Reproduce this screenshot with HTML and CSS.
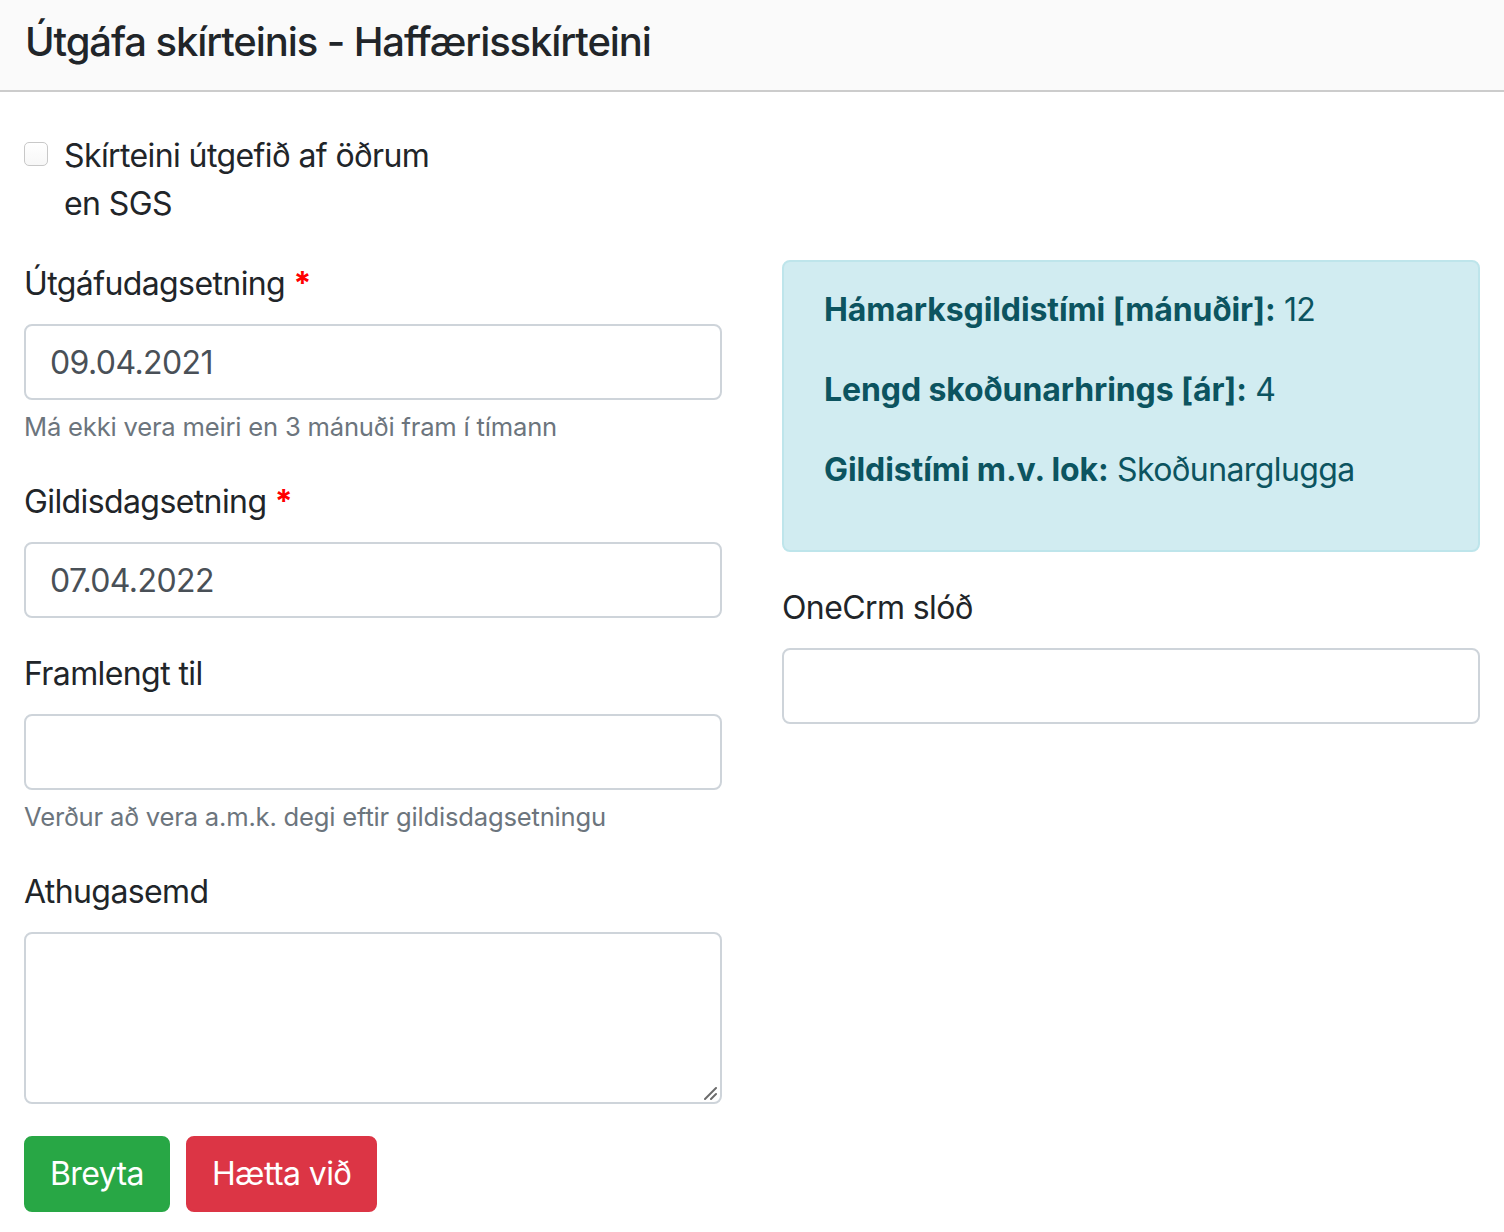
FILE: index.html
```html
<!DOCTYPE html>
<html lang="is">
<head>
<meta charset="utf-8">
<title>Útgáfa skírteinis</title>
<link rel="stylesheet" href="styles.css">
</head>
<body>
<div class="modal">
  <div class="modal-header">
    <h5 class="modal-title">Útgáfa skírteinis - Haffærisskírteini</h5>
  </div>
  <div class="modal-body">
    <div class="form-check">
      <span class="check-box"></span>
      <label class="check-label">Skírteini útgefið af öðrum en SGS</label>
    </div>
    <div class="row">
      <div class="col">
        <div class="form-group">
          <label class="form-label">Útgáfudagsetning <span class="req">*</span></label>
          <input class="form-control" type="text" value="09.04.2021">
          <small class="help">Má ekki vera meiri en 3 mánuði fram í tímann</small>
        </div>
        <div class="form-group">
          <label class="form-label">Gildisdagsetning <span class="req">*</span></label>
          <input class="form-control" type="text" value="07.04.2022">
        </div>
        <div class="form-group">
          <label class="form-label">Framlengt til</label>
          <input class="form-control" type="text" value="">
          <small class="help">Verður að vera a.m.k. degi eftir gildisdagsetningu</small>
        </div>
        <div class="form-group">
          <label class="form-label">Athugasemd</label>
          <div class="textarea-wrap">
            <textarea class="form-control textarea" rows="3"></textarea>
            <svg class="grip" width="14" height="14" viewBox="0 0 14 14" aria-hidden="true">
              <line x1="1" y1="13" x2="12" y2="2" stroke="#6b6b6b" stroke-width="2" stroke-linecap="round"/>
              <line x1="7" y1="13" x2="12" y2="8" stroke="#6b6b6b" stroke-width="2" stroke-linecap="round"/>
            </svg>
          </div>
        </div>
      </div>
      <div class="col">
        <div class="alert-info">
          <p><strong>Hámarksgildistími [mánuðir]:</strong> 12</p>
          <p><strong>Lengd skoðunarhrings [ár]:</strong> 4</p>
          <p><strong>Gildistími m.v. lok:</strong> Skoðunarglugga</p>
        </div>
        <div class="form-group">
          <label class="form-label">OneCrm slóð</label>
          <input class="form-control" type="text" value="">
        </div>
      </div>
    </div>
    <div class="actions">
      <button class="btn btn-success">Breyta</button>
      <button class="btn btn-danger">Hætta við</button>
    </div>
  </div>
</div>
</body>
</html>
```

FILE: styles.css
```css
* { box-sizing: border-box; }
html, body {
  margin: 0;
  padding: 0;
  background: #ffffff;
}
body {
  font-family: Inter, "Noto Sans", "Liberation Sans", sans-serif;
  color: #212529;
  font-size: 32px;
  line-height: 48px;
  letter-spacing: -0.6px;
}
.modal-header {
  height: 92px;
  background: #fafafa;
  border-bottom: 2px solid #cccccc;
  padding: 12px 25px 0;
}
.modal-title {
  margin: 0;
  font-size: 40px;
  line-height: 60px;
  font-weight: 500;
  color: #212529;
  letter-spacing: -1.1px;
}
.modal-body {
  padding: 40px 24px 20px;
}
.form-check {
  display: flex;
  align-items: flex-start;
  gap: 16px;
  margin-bottom: 32px;
}
.check-box {
  flex: none;
  width: 24px;
  height: 24px;
  margin-top: 10px;
  border: 1.5px solid #c8c8c8;
  border-radius: 5px;
  background: linear-gradient(#ffffff, #f7f7f7);
}
.check-label {
  max-width: 400px;
}
.row {
  display: grid;
  grid-template-columns: 698px 698px;
  column-gap: 60px;
}
.form-group {
  margin-bottom: 32px;
}
.form-label {
  display: block;
  margin-bottom: 16px;
}
.req {
  color: #ff0000;
  font-weight: 700;
}
.form-control {
  display: block;
  width: 100%;
  height: 76px;
  padding: 12px 24px;
  font-family: inherit;
  font-size: 32px;
  line-height: 48px;
  letter-spacing: -0.6px;
  color: #495057;
  background: #ffffff;
  border: 2px solid #ced4da;
  border-radius: 8px;
  outline: none;
  margin: 0;
}
.textarea-wrap {
  position: relative;
}
.textarea {
  height: 172px;
  resize: none;
}
.grip {
  position: absolute;
  right: 4px;
  bottom: 4px;
}
.help {
  display: block;
  margin-top: 8px;
  font-size: 25.6px;
  line-height: 38px;
  letter-spacing: -0.2px;
  color: #6c757d;
}
.alert-info {
  background: #d1ecf1;
  border: 2px solid #bee5eb;
  border-radius: 8px;
  color: #0c5460;
  padding: 24px 40px;
  margin-bottom: 32px;
}
.alert-info p {
  margin: 0 0 32px;
}
.alert-info strong {
  font-weight: 700;
  letter-spacing: -0.1px;
}
.actions {
  display: flex;
  gap: 16px;
}
.btn {
  font-family: inherit;
  font-size: 32px;
  line-height: 48px;
  letter-spacing: -0.6px;
  padding: 12px 24px;
  border: 2px solid transparent;
  border-radius: 8px;
  color: #ffffff;
  cursor: pointer;
}
.btn-success {
  background: #28a745;
  border-color: #28a745;
}
.btn-danger {
  background: #dc3545;
  border-color: #dc3545;
}
```
